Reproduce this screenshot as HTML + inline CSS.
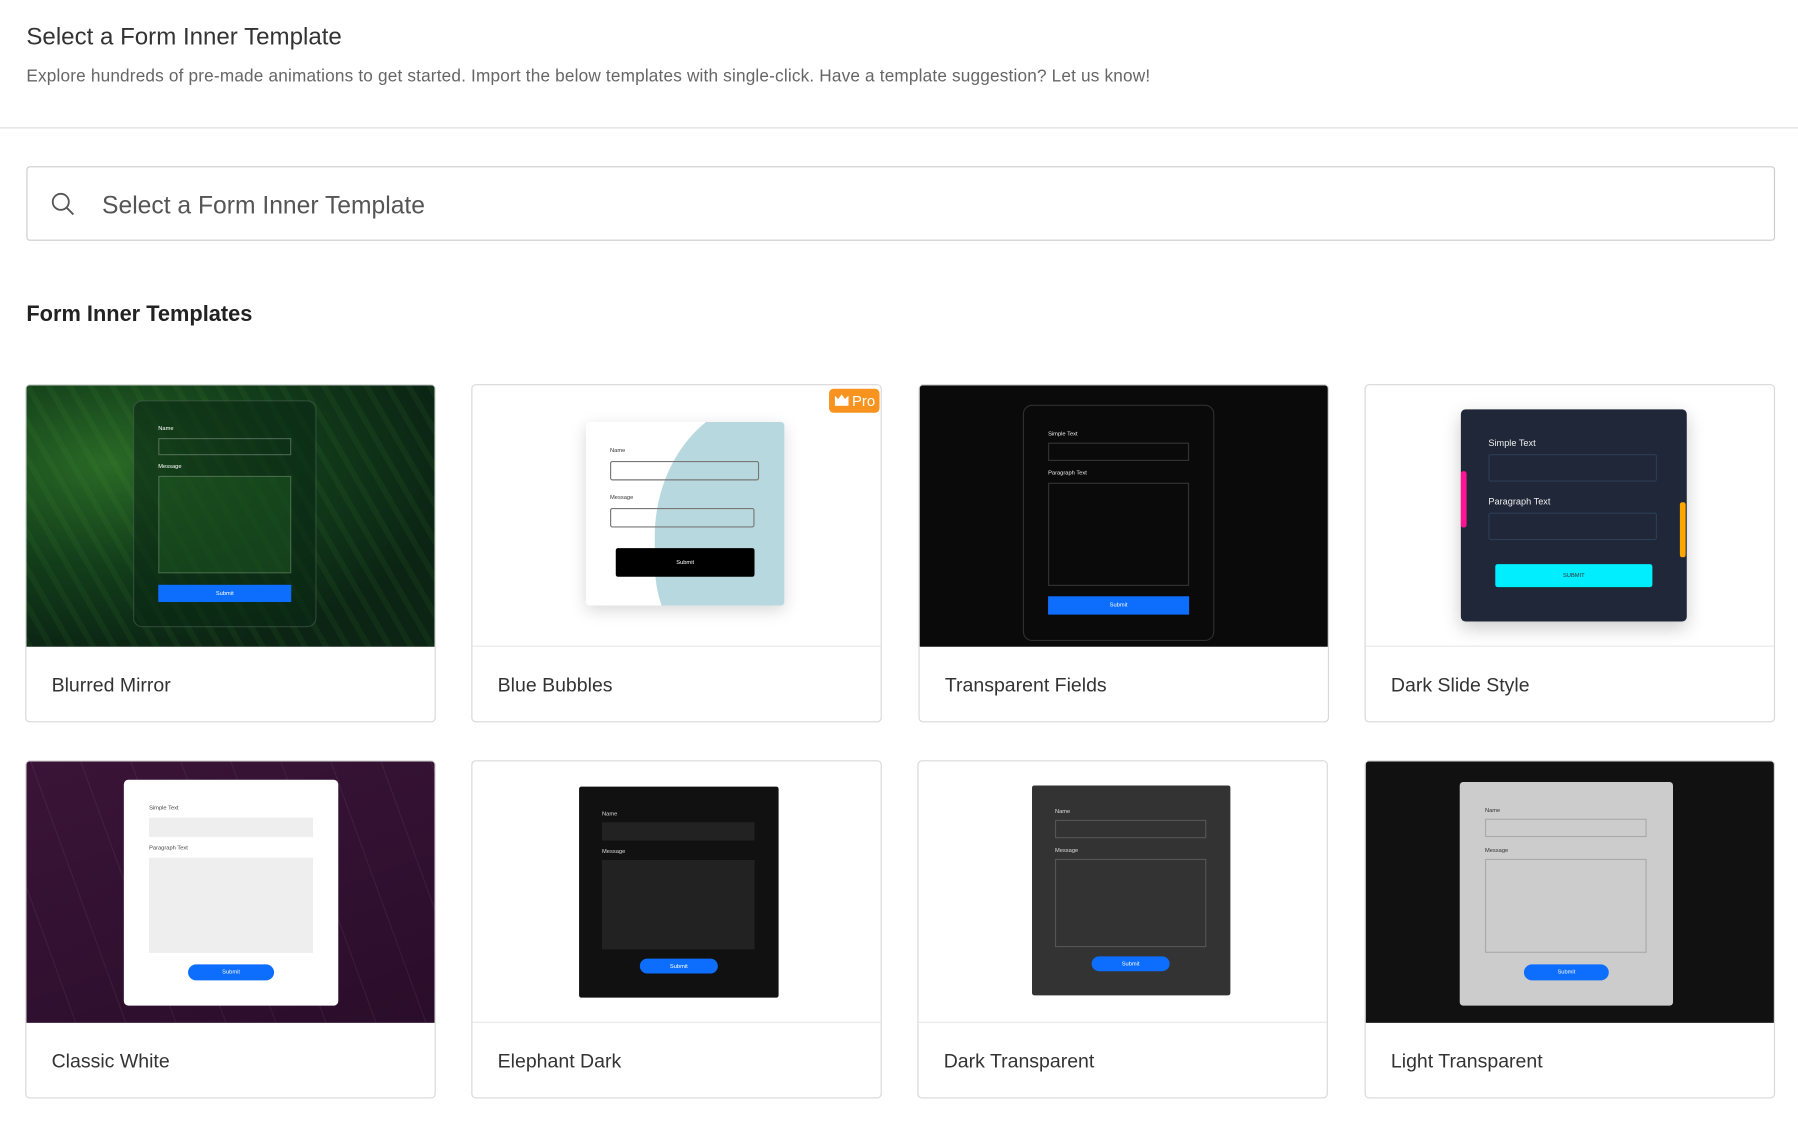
<!DOCTYPE html>
<html><head><meta charset="utf-8"><style>
*{box-sizing:border-box;margin:0;padding:0}
html,body{width:1798px;height:1138px;overflow:hidden;background:#fff}
#w{width:1568px;height:993px;transform:scale(1.14668);transform-origin:0 0;position:relative;font-family:"Liberation Sans",sans-serif}
.a{position:absolute}
.card{position:absolute;width:358px;height:295px;border:1px solid #d8d8d8;border-radius:4px;overflow:hidden;background:#fff}
.img{position:absolute;left:0;top:0;width:100%;height:228px;border-bottom:1px solid #e8e8e8}
.lbl{position:absolute;left:22px;top:252px;font-size:17px;color:#333}
.t{position:absolute;font-size:5px;white-space:nowrap}
.btn{position:absolute;background:#0d6efd;color:#fff;font-size:5px;display:flex;align-items:center;justify-content:center}
</style></head><body><div id="w">
<div class="a" style="left:23px;top:21px;font-size:21px;color:#333">Select a Form Inner Template</div>
<div class="a" style="left:23px;top:58px;font-size:15px;color:#666;letter-spacing:.15px">Explore hundreds of pre-made animations to get started. Import the below templates with single-click. Have a template suggestion? Let us know!</div>
<div class="a" style="left:0;top:111px;width:1568px;height:1px;background:#ddd"></div>
<div class="a" style="left:23px;top:145px;width:1525px;height:65px;border:1px solid #ccc;border-radius:3px"></div>
<svg class="a" style="left:43px;top:166px" width="24" height="24" viewBox="0 0 24 24" fill="none" stroke="#555" stroke-width="1.6"><circle cx="10" cy="10" r="7"/><path d="M15 15l6 6"/></svg>
<div class="a" style="left:89px;top:167px;font-size:21.5px;color:#555">Select a Form Inner Template</div>
<div class="a" style="left:23px;top:264px;font-size:19px;color:#222;font-weight:bold">Form Inner Templates</div>

<!-- card1 -->
<div class="card" style="left:22px;top:335px"><div class="img" style="background:radial-gradient(ellipse at 20% 30%,#2a6a26 0,#123d1a 40%,#0b2414 75%);border:none">
<div class="a" style="left:0;top:0;width:100%;height:100%;background:repeating-linear-gradient(60deg,rgba(90,170,60,.08) 0 5px,transparent 5px 16px)"></div>
<div class="a" style="left:93px;top:13px;width:160px;height:198px;border:1px solid rgba(255,255,255,.15);border-radius:8px;background:rgba(10,40,20,.6)"></div>
<div class="t" style="left:115px;top:35px;color:#fff">Name</div>
<div class="a" style="left:115px;top:46px;width:116px;height:15px;border:1px solid rgba(255,255,255,.25)"></div>
<div class="t" style="left:115px;top:68px;color:#fff">Message</div>
<div class="a" style="left:115px;top:79px;width:116px;height:85px;border:1px solid rgba(255,255,255,.2);background:rgba(40,110,40,.35)"></div>
<div class="btn" style="left:115px;top:174px;width:116px;height:15px">Submit</div>
</div><div class="lbl">Blurred Mirror</div></div>

<!-- card2 -->
<div class="card" style="left:411px;top:335px"><div class="img">
<div class="a" style="left:99px;top:32px;width:173px;height:160px;background:#fff;box-shadow:0 4px 14px rgba(0,0,0,.15);border-radius:3px;overflow:hidden">
<div class="a" style="left:60px;top:-20px;width:200px;height:240px;border-radius:50% 0 0 40%;background:#b8d8df"></div></div>
<div class="t" style="left:120px;top:54px;color:#333">Name</div>
<div class="a" style="left:120px;top:66px;width:130px;height:17px;border:1px solid #777;border-radius:2px"></div>
<div class="t" style="left:120px;top:95px;color:#333">Message</div>
<div class="a" style="left:120px;top:107px;width:126px;height:17px;border:1px solid #777;border-radius:2px"></div>
<div class="btn" style="left:125px;top:142px;width:121px;height:25px;background:#000;border-radius:2px">Submit</div>
<div class="a" style="left:311px;top:3px;width:44px;height:21px;background:#f7931e;border-radius:4px;color:#fff;font-size:13px;line-height:21px;padding-left:20px">Pro</div>
<svg class="a" style="left:316px;top:8px" width="12" height="10" viewBox="0 0 12 10"><path d="M0 1l3 3 3-4 3 4 3-3v9H0z" fill="#fff"/></svg>
</div><div class="lbl">Blue Bubbles</div></div>

<!-- card3 -->
<div class="card" style="left:801px;top:335px"><div class="img" style="background:#0a0a0a;border:none">
<div class="a" style="left:90px;top:17px;width:167px;height:206px;border:1px solid #2f2f2f;border-radius:8px"></div>
<div class="t" style="left:112px;top:40px;color:#eee">Simple Text</div>
<div class="a" style="left:112px;top:50px;width:123px;height:16px;border:1px solid #333"></div>
<div class="t" style="left:112px;top:74px;color:#eee">Paragraph Text</div>
<div class="a" style="left:112px;top:85px;width:123px;height:90px;border:1px solid #333"></div>
<div class="btn" style="left:112px;top:184px;width:123px;height:16px">Submit</div>
</div><div class="lbl">Transparent Fields</div></div>

<!-- card4 -->
<div class="card" style="left:1190px;top:335px"><div class="img">
<div class="a" style="left:83px;top:21px;width:197px;height:185px;background:#1f2738;border-radius:4px;box-shadow:0 6px 16px rgba(0,0,0,.2)"></div>
<div class="a" style="left:83px;top:75px;width:5px;height:49px;background:#ff1493;border-radius:2px"></div>
<div class="a" style="left:274px;top:102px;width:5px;height:48px;background:#ffa500;border-radius:2px"></div>
<div class="t" style="left:107px;top:46px;color:#eee;font-size:8px">Simple Text</div>
<div class="a" style="left:107px;top:60px;width:147px;height:24px;border:1px solid #2c3e55;border-radius:2px"></div>
<div class="t" style="left:107px;top:97px;color:#eee;font-size:8px">Paragraph Text</div>
<div class="a" style="left:107px;top:111px;width:147px;height:24px;border:1px solid #2c3e55;border-radius:2px"></div>
<div class="btn" style="left:113px;top:156px;width:137px;height:20px;background:#00eeff;color:#333;border-radius:2px">SUBMIT</div>
</div><div class="lbl">Dark Slide Style</div></div>

<!-- card5 -->
<div class="card" style="left:22px;top:663px"><div class="img" style="background:linear-gradient(160deg,#3a1438,#2a0d2a);border:none">
<div class="a" style="left:0;top:0;width:100%;height:100%;background:repeating-linear-gradient(70deg,transparent 0 40px,rgba(255,255,255,.05) 40px 41px)"></div>
<div class="a" style="left:85px;top:16px;width:187px;height:197px;background:#fff;border-radius:4px"></div>
<div class="t" style="left:107px;top:38px;color:#444">Simple Text</div>
<div class="a" style="left:107px;top:49px;width:143px;height:17px;background:#eee"></div>
<div class="t" style="left:107px;top:73px;color:#444">Paragraph Text</div>
<div class="a" style="left:107px;top:84px;width:143px;height:83px;background:#eee"></div>
<div class="btn" style="left:141px;top:177px;width:75px;height:14px;border-radius:8px">Submit</div>
</div><div class="lbl">Classic White</div></div>

<!-- card6 -->
<div class="card" style="left:411px;top:663px"><div class="img">
<div class="a" style="left:93px;top:22px;width:174px;height:184px;background:#111;border-radius:2px"></div>
<div class="t" style="left:113px;top:43px;color:#ddd">Name</div>
<div class="a" style="left:113px;top:53px;width:133px;height:16px;background:#222"></div>
<div class="t" style="left:113px;top:76px;color:#ddd">Message</div>
<div class="a" style="left:113px;top:86px;width:133px;height:78px;background:#222"></div>
<div class="btn" style="left:146px;top:172px;width:68px;height:13px;border-radius:8px">Submit</div>
</div><div class="lbl">Elephant Dark</div></div>

<!-- card7 -->
<div class="card" style="left:800px;top:663px"><div class="img">
<div class="a" style="left:99px;top:21px;width:173px;height:183px;background:#333;border-radius:2px"></div>
<div class="t" style="left:119px;top:41px;color:#ddd">Name</div>
<div class="a" style="left:119px;top:51px;width:132px;height:16px;border:1px solid #555"></div>
<div class="t" style="left:119px;top:75px;color:#ddd">Message</div>
<div class="a" style="left:119px;top:85px;width:132px;height:77px;border:1px solid #555"></div>
<div class="btn" style="left:151px;top:170px;width:68px;height:13px;border-radius:8px">Submit</div>
</div><div class="lbl">Dark Transparent</div></div>

<!-- card8 -->
<div class="card" style="left:1190px;top:663px"><div class="img" style="background:#111;border:none">
<div class="a" style="left:82px;top:18px;width:186px;height:195px;background:#ccc;border-radius:3px"></div>
<div class="t" style="left:104px;top:40px;color:#333">Name</div>
<div class="a" style="left:104px;top:50px;width:141px;height:16px;border:1px solid #aaa"></div>
<div class="t" style="left:104px;top:75px;color:#333">Message</div>
<div class="a" style="left:104px;top:85px;width:141px;height:82px;border:1px solid #aaa"></div>
<div class="btn" style="left:138px;top:177px;width:74px;height:14px;border-radius:8px">Submit</div>
</div><div class="lbl">Light Transparent</div></div>
</div></body></html>
